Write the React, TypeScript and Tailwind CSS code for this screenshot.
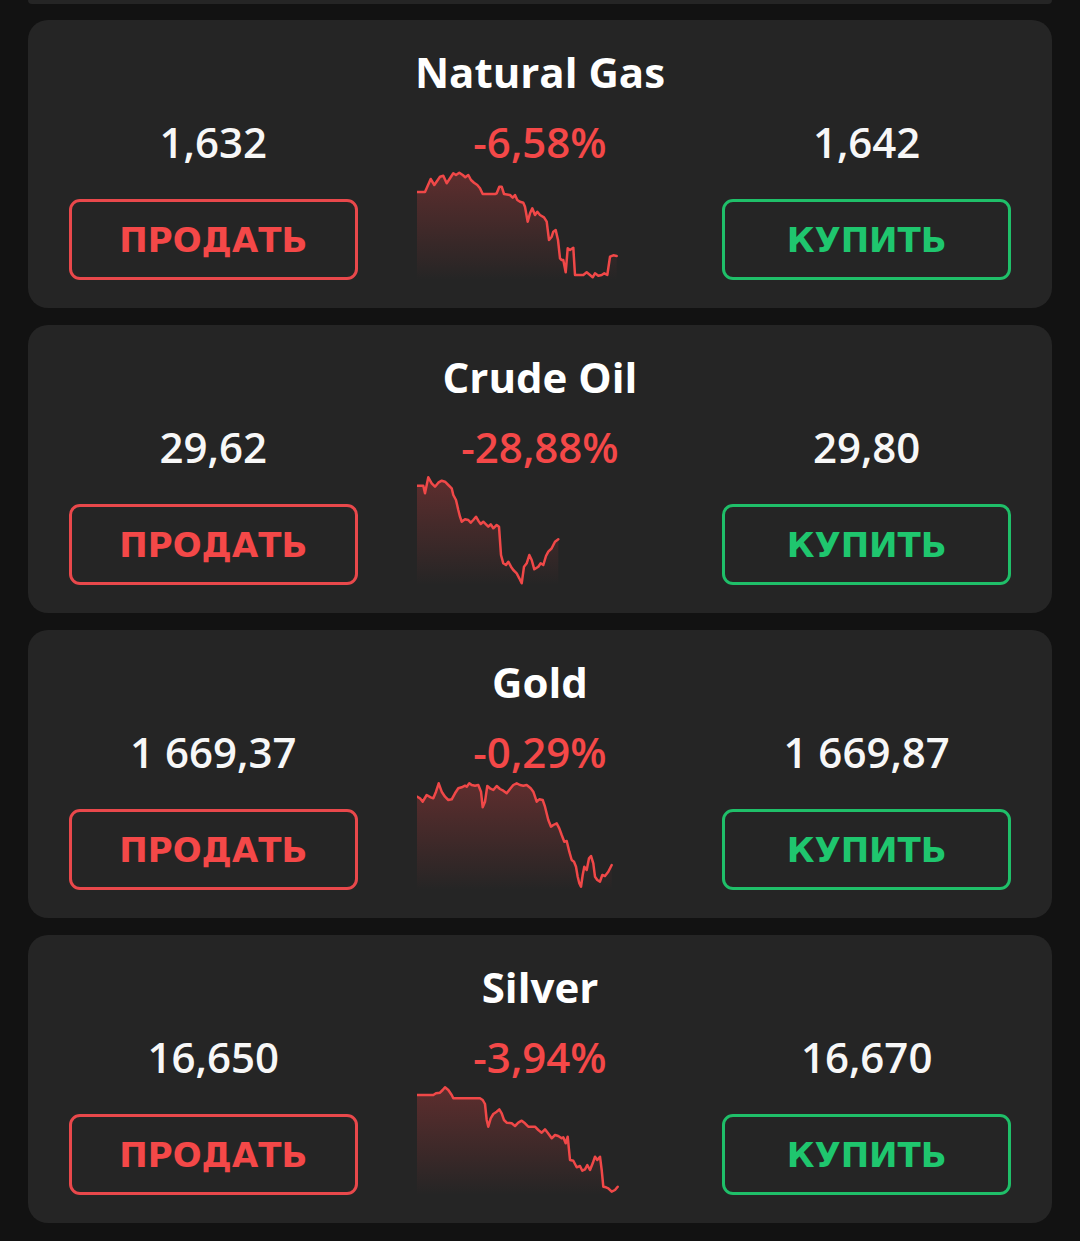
import React from "react";

type Quote = {
  name: string;
  bid: string;
  ask: string;
  change: string;
  chart: number[][];
};

const quotes: Quote[] = [
  {
    name: "Natural Gas",
    bid: "1,632",
    ask: "1,642",
    change: "-6,58%",
    chart: [
      [0, 22], [8, 22], [13.7, 9], [17.3, 15], [23, 6.7], [26.3, 5.7], [29.7, 13.3], [33, 8.3],
      [36.3, 3.3], [39, 5], [42.3, 2.7], [45.7, 5], [48.3, 7.3], [51.3, 5], [54, 10], [57, 12.7],
      [60.3, 15], [63, 18.3], [65.7, 24], [78, 24], [79.7, 23.3], [82.3, 16.7], [84.7, 16.7], [87, 24],
      [93, 25], [95.7, 27.7], [98, 25], [100.3, 30], [103, 31.7], [106.3, 32.7], [108, 36.7],
      [110.7, 51.7], [113, 43.3], [115.3, 38.3], [118, 45], [120.3, 41.7], [123, 45], [127, 47.3],
      [129.7, 51.7], [132, 70], [134.7, 66.7], [136.3, 61.7], [138.7, 60], [141, 70], [143, 88.3],
      [144.7, 90], [146.3, 90], [148.7, 102.3], [150.7, 78.3], [153, 80], [156.3, 77.7], [158, 105],
      [166.3, 105], [169.7, 102.3], [173, 105], [175.7, 107.3], [178, 103.3], [181.3, 105.7],
      [184.7, 105], [187.3, 103.3], [190.3, 105], [193, 86.7], [196.3, 85.3], [199.7, 86],
    ],
  },
  {
    name: "Crude Oil",
    bid: "29,62",
    ask: "29,80",
    change: "-28,88%",
    chart: [
      [0, 10.7], [6.3, 10.7], [8, 18.3], [11.3, 2.3], [14.7, 8.3], [18, 11.7], [21.3, 7.7], [24.7, 5.7],
      [28, 6.7], [31.3, 10], [34.7, 13.3], [36.3, 20], [39, 25], [41.3, 35], [43, 41.7], [44.7, 46.7],
      [48, 44.3], [51.3, 45], [53.7, 47.7], [56.3, 45], [59, 41.7], [61.3, 45.7], [63.7, 49],
      [66.3, 46.7], [69, 49.3], [71.3, 51.7], [73.7, 49.3], [76.3, 53.3], [79.7, 50], [82, 51.7],
      [84, 80], [86.3, 88.3], [89, 90], [91.3, 86.7], [94, 91.7], [96.3, 95], [99.7, 98.3],
      [102.3, 103.3], [104.7, 108.3], [107, 91.7], [109.7, 88.3], [112.3, 80], [114.7, 85],
      [117.3, 94.3], [121.3, 91.7], [123.7, 88.3], [126.3, 90], [129, 81], [131.3, 76.7],
      [134.7, 73.3], [138, 66.7], [141.3, 64.3],
    ],
  },
  {
    name: "Gold",
    bid: "1 669,37",
    ask: "1 669,87",
    change: "-0,29%",
    chart: [
      [0, 16.7], [3, 18.3], [5.7, 21.7], [9.7, 15], [13.7, 17.3], [16.3, 18.3], [19, 11.7], [21.7, 3.3],
      [24.7, 11.7], [28, 16.7], [31.3, 20], [34.7, 19.3], [38, 13.3], [41.3, 8.3], [44.7, 7.3],
      [48, 5.7], [49.7, 6.7], [52.3, 3.3], [54.7, 5], [58, 5.7], [61.3, 5], [64, 11.7], [65.7, 27.3],
      [68, 21.7], [70.3, 6], [73, 8.3], [76.3, 10], [79.7, 6], [83, 9], [86.3, 10.7], [89.7, 13.3],
      [93, 9], [96.3, 5], [99.7, 3.3], [103, 5], [106.3, 5.7], [109.7, 5], [113.7, 8.3], [116.3, 11.7],
      [119.7, 21.7], [122.3, 19.3], [125.7, 20], [128, 26.7], [131.3, 40], [134, 46.7], [136.3, 45],
      [139.7, 43.3], [142.3, 48.3], [144.7, 55], [147.3, 61.7], [149.7, 61], [152.3, 71.7],
      [154.7, 80], [157, 81.7], [159, 86.7], [160.7, 96.7], [162.3, 103.3], [164, 106.7],
      [165.7, 95], [167.3, 86.7], [169.7, 90], [172, 78.3], [174, 76], [176.3, 83.3], [178, 96.7],
      [180.3, 100], [183, 101.7], [185.3, 95], [188, 96], [191.3, 91.7], [194.7, 85],
    ],
  },
  {
    name: "Silver",
    bid: "16,650",
    ask: "16,670",
    change: "-3,94%",
    chart: [
      [0, 10], [16.3, 10], [19, 8.3], [23, 7.7], [25.7, 5], [28, 2.3], [31.3, 5], [34.7, 10],
      [36.3, 13.3], [63, 13.3], [65.7, 15], [68, 19], [69.7, 35], [71.3, 41.7], [73.7, 33.3],
      [76.3, 29], [79.7, 26.7], [82.3, 24.3], [84.7, 28.3], [87, 35], [89.7, 37.7], [94.7, 38.3],
      [98, 41], [101.3, 37.7], [104.7, 35.7], [108, 38.3], [111.3, 41.7], [118, 41.7], [121.3, 45],
      [124.7, 47.7], [128, 44.3], [130.7, 47.7], [134.7, 53.3], [138, 50], [141.3, 51],
      [144.7, 53.3], [146.3, 52.3], [148.7, 58.3], [150.7, 51.7], [153, 75], [156.3, 75.7],
      [159.7, 82.3], [163, 81], [165.3, 85.7], [168, 84.3], [170.3, 80], [173, 85], [175.7, 78.3],
      [178, 71.7], [180.3, 75], [183, 71.7], [184.7, 85], [186.3, 101.7], [189, 102.3],
      [191.3, 103.3], [194.7, 106.7], [198, 105], [200.7, 101.7],
    ],
  },
];

const numFont = { fontFamily: '"Open Sans", "Noto Sans", sans-serif' };
const btnFont = { fontFamily: '"DejaVu Sans", "Verdana", sans-serif' };

const Sparkline = ({ points, id }: { points: number[][]; id: string }) => {
  const line = points.map((p, i) => `${i ? "L" : "M"}${p[0]} ${p[1]}`).join(" ");
  const last = points[points.length - 1];
  const area = `${line} L${last[0]} 110 L0 110 Z`;
  return (
    <svg width="246" height="110" viewBox="0 0 246 110" className="mx-auto block">
      <defs>
        <linearGradient id={id} x1="0" y1="0" x2="0" y2="1">
          <stop offset="0%" stopColor="#ef4444" stopOpacity="0.28" />
          <stop offset="100%" stopColor="#ef4444" stopOpacity="0" />
        </linearGradient>
      </defs>
      <path d={area} fill={`url(#${id})`} />
      <path
        d={line}
        fill="none"
        stroke="#f04848"
        strokeWidth="2.5"
        strokeLinejoin="round"
        strokeLinecap="round"
      />
    </svg>
  );
};

const QuoteCard = ({ q, idx }: { q: Quote; idx: number }) => (
  <div className="mx-[28px] rounded-[20px] bg-[#252525] pt-[30px] pb-[28px] px-[41px]">
    <div
      className="h-[43px] text-center text-[42px] leading-[43px] font-bold text-white"
      style={numFont}
    >
      {q.name}
    </div>
    <div className="mt-[28px] grid grid-cols-3 gap-x-[38px]">
      {/* sell */}
      <div className="flex flex-col items-center">
        <div className="h-[42px] text-[42px] leading-[42px] font-semibold text-[#f7f7f7]" style={numFont}>
          {q.bid}
        </div>
        <button className="mt-[36px] flex h-[81px] w-full items-center justify-center rounded-[11px] border-[3px] border-[#e9484b]">
          <span className="text-[34px] leading-none font-bold text-[#f44848]" style={btnFont}>
            ПРОДАТЬ
          </span>
        </button>
      </div>

      {/* change + chart */}
      <div className="flex flex-col items-center">
        <div className="h-[42px] text-[42px] leading-[42px] font-semibold text-[#f44848]" style={numFont}>
          {q.change}
        </div>
        <div className="mt-[7px]">
          <Sparkline points={q.chart} id={`grad-${idx}`} />
        </div>
      </div>

      {/* buy */}
      <div className="flex flex-col items-center">
        <div className="h-[42px] text-[42px] leading-[42px] font-semibold text-[#f7f7f7]" style={numFont}>
          {q.ask}
        </div>
        <button className="mt-[36px] flex h-[81px] w-full items-center justify-center rounded-[11px] border-[3px] border-[#1fbf69]">
          <span className="text-[34px] leading-none font-bold text-[#1fc66e]" style={btnFont}>
            КУПИТЬ
          </span>
        </button>
      </div>
    </div>
  </div>
);

export default function App() {
  return (
    <div className="min-h-screen w-full bg-[#121212] pb-[18px]">
      {/* tail of the card above */}
      <div className="mx-[28px] h-[4px] rounded-b-[20px] bg-[#252525]" />
      <div className="mt-[16px] flex flex-col gap-[17px]">
        {quotes.map((q, i) => (
          <QuoteCard key={q.name} q={q} idx={i} />
        ))}
      </div>
    </div>
  );
}
